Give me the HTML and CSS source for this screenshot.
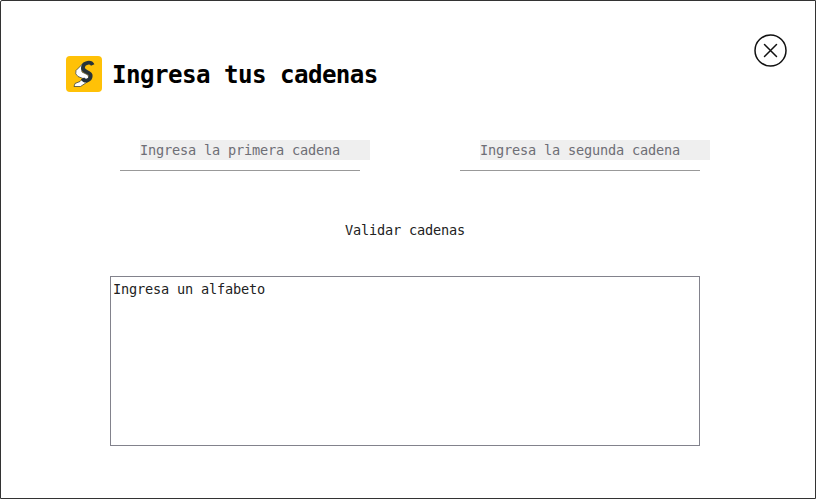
FILE: index.html
```html
<!DOCTYPE html>
<html lang="es">
<head>
<meta charset="utf-8">
<title>Ingresa tus cadenas</title>
<link rel="stylesheet" href="styles.css">
</head>
<body>
<main class="window">
  <header class="header">
    <svg class="logo" viewBox="0 0 36 36" aria-hidden="true">
      <rect width="36" height="36" rx="4" fill="#ffc107"/>
      <path d="M17.500 7L10 14.500Q8.500 18 12 20.500L17 22.500L14 25.500L9 27.500L8 30.500L14.500 30.500L23.500 24.500L22 19L16 16L15.500 12L19 7Z" fill="#fff" stroke="#263238" stroke-width=".7"/>
      <path d="M26.700 9C25 5.500 18 6 17 11C16 17 25 15 24.700 20C24.500 25 18.500 26 16.500 22.500" fill="none" stroke="#263238" stroke-width="3.8"/>
    </svg>
    <h1 class="title">Ingresa tus cadenas</h1>
    <button class="close" aria-label="Cerrar">
      <svg viewBox="0 0 34 34"><circle cx="16.500" cy="17.500" r="15.500"/><path d="M10.500 11.500L22.500 23.500M22.500 11.500L10.500 23.500"/></svg>
    </button>
  </header>
  <section class="fields">
    <div class="field"><div class="input">Ingresa la primera cadena</div></div>
    <div class="field"><div class="input">Ingresa la segunda cadena</div></div>
  </section>
  <button class="validate">Validar cadenas</button>
  <div class="alphabet">Ingresa un alfabeto</div>
</main>
</body>
</html>
```
FILE: styles.css
```css
* { box-sizing: border-box; }
body {
  margin: 0;
  background: #fff;
  color: #222;
  font-family: "DejaVu Sans Mono", monospace;
  font-size: 13.6px;
  letter-spacing: -0.188px;
  line-height: 20px;
}
.window {
  width: 816px;
  height: 499px;
  border: 1px solid #333;
  border-radius: 2px 0 0 0;
  display: flex;
  flex-direction: column;
}
.header {
  display: flex;
  align-items: flex-start;
  height: 139px;
  padding: 32px 27px 0 65px;
}
.logo { width: 36px; height: 36px; margin-top: 23px; }
.title {
  margin: 26px auto 0 10px;
  color: #000;
  font-size: 24.2px;
  letter-spacing: -0.57px;
  line-height: 33px;
}
button {
  padding: 0;
  border: 0;
  background: none;
  color: inherit;
  font: inherit;
  letter-spacing: inherit;
}
.close { width: 34px; height: 34px; }
.close svg {
  display: block;
  fill: none;
  stroke: #111;
  stroke-width: 1.5;
  stroke-linecap: round;
}
.fields { display: flex; gap: 100px; padding-left: 119px; }
.field {
  width: 240px;
  height: 31px;
  padding-left: 20px;
  border-bottom: 1px solid #999;
}
.input {
  width: 230px;
  height: 20px;
  background: #efefef;
  color: #6e6e76;
}
.validate {
  width: 120px;
  height: 20px;
  margin: 49px 0 0 344px;
  white-space: nowrap;
}
.alphabet {
  width: 590px;
  height: 170px;
  margin: 36px 0 0 109px;
  padding: 2px;
  border: 1px solid #82828c;
}
```
